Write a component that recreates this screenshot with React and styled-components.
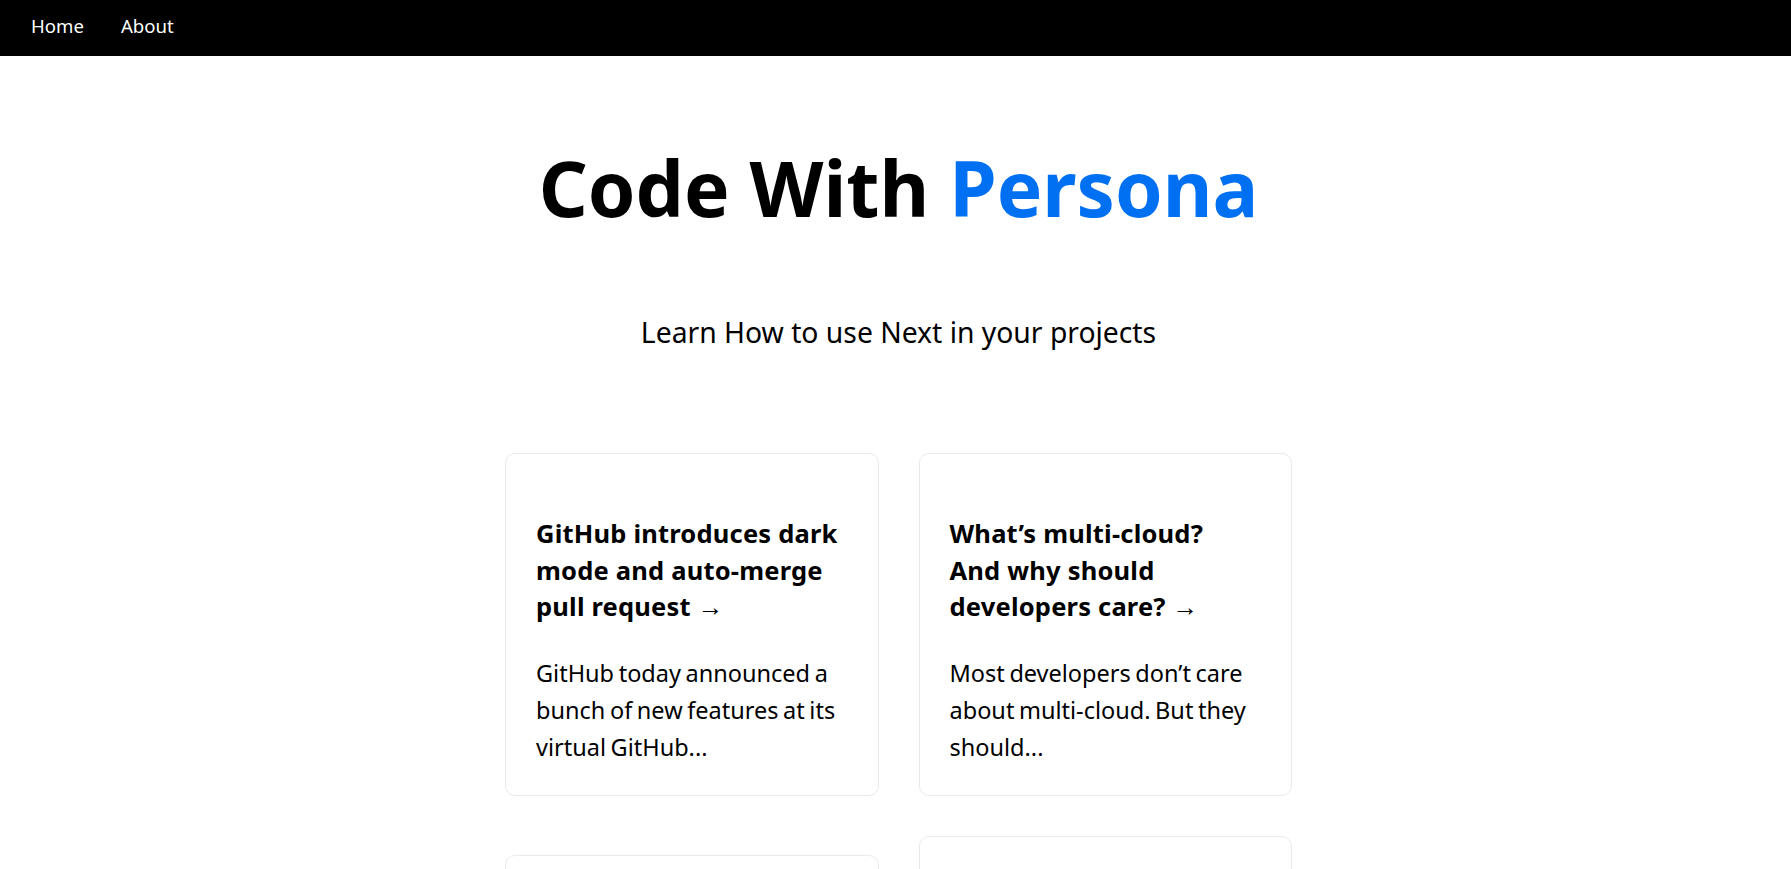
import React from 'react';
import styled, { createGlobalStyle } from 'styled-components';

const theme = {
    font: '"Noto Sans", "Open Sans", sans-serif',
    blue: '#0070f3',
    border: '#eaeaea',
};

const GlobalStyle = createGlobalStyle`
    html, body {
        margin: 0;
        padding: 0;
        font-family: ${theme.font};
        color: #000;
        background: #fff;
        overflow-x: hidden;
    }
    * {
        box-sizing: border-box;
    }
`;

const Nav = styled.nav`
    display: flex;
    align-items: center;
    gap: 37px;
    height: 56px;
    padding: 0 31px 5px;
    background: #000;
`;

const NavLink = styled.a`
    color: #fff;
    font-size: 18.6px;
    text-decoration: none;
    cursor: pointer;
`;

const Main = styled.main`
    display: flex;
    flex-direction: column;
    align-items: center;
    padding: 85px 0 0 6px;
`;

const Title = styled.h1`
    margin: 0;
    font-size: 76.5px;
    line-height: 92px;
    font-weight: 700;
    text-align: center;
`;

const Accent = styled.span`
    color: ${theme.blue};
`;

const Description = styled.p`
    margin: 77px 0 0;
    font-size: 28.3px;
    line-height: 45px;
    text-align: center;
`;

const Grid = styled.div`
    display: flex;
    flex-wrap: wrap;
    align-items: center;
    justify-content: center;
    width: 830px;
    margin-top: 78px;
`;

const Card = styled.a`
    flex-basis: 45%;
    margin: 20px;
    padding: 30px;
    border: 1px solid ${theme.border};
    border-radius: 10px;
    color: inherit;
    text-decoration: none;
`;

const CardTitle = styled.h2`
    margin: 31px 0 30px;
    font-size: 25.5px;
    letter-spacing: 0.2px;
    line-height: 36.7px;
    font-weight: 700;
`;

const CardText = styled.p`
    margin: 0;
    font-size: 23.5px;
    word-spacing: -1.5px;
    line-height: 36.7px;
`;

const posts = [
    {
        title: ['GitHub introduces dark mode and auto-merge pull request'],
        text: 'GitHub today announced a bunch of new features at its virtual GitHub...',
    },
    {
        title: ['What\u2019s multi-cloud?', 'And why should developers care?'],
        text: 'Most developers don\u2019t care about multi-cloud. But they should...',
    },
    {
        title: ['Next.js 10 brings image optimization'],
        text: 'Vercel released a new version of its React framework with...',
    },
    {
        title: ['Why every developer should learn TypeScript in 2021'],
        text: 'Types help you catch bugs early and ship with confidence...',
    },
];

const App = () => {
    return (
        <>
            <GlobalStyle />
            <Nav>
                <NavLink>Home</NavLink>
                <NavLink>About</NavLink>
            </Nav>
            <Main>
                <Title>
                    Code With <Accent>Persona</Accent>
                </Title>
                <Description>Learn How to use Next in your projects</Description>
                <Grid>
                    {posts.map((post) => (
                        <Card key={post.text}>
                            <CardTitle>
                                {post.title.map((line, i) => (
                                    <React.Fragment key={line}>
                                        {i > 0 && <br />}
                                        {line}
                                    </React.Fragment>
                                ))}{' '}
                                &rarr;
                            </CardTitle>
                            <CardText>{post.text}</CardText>
                        </Card>
                    ))}
                </Grid>
            </Main>
        </>
    );
};

export default App;
